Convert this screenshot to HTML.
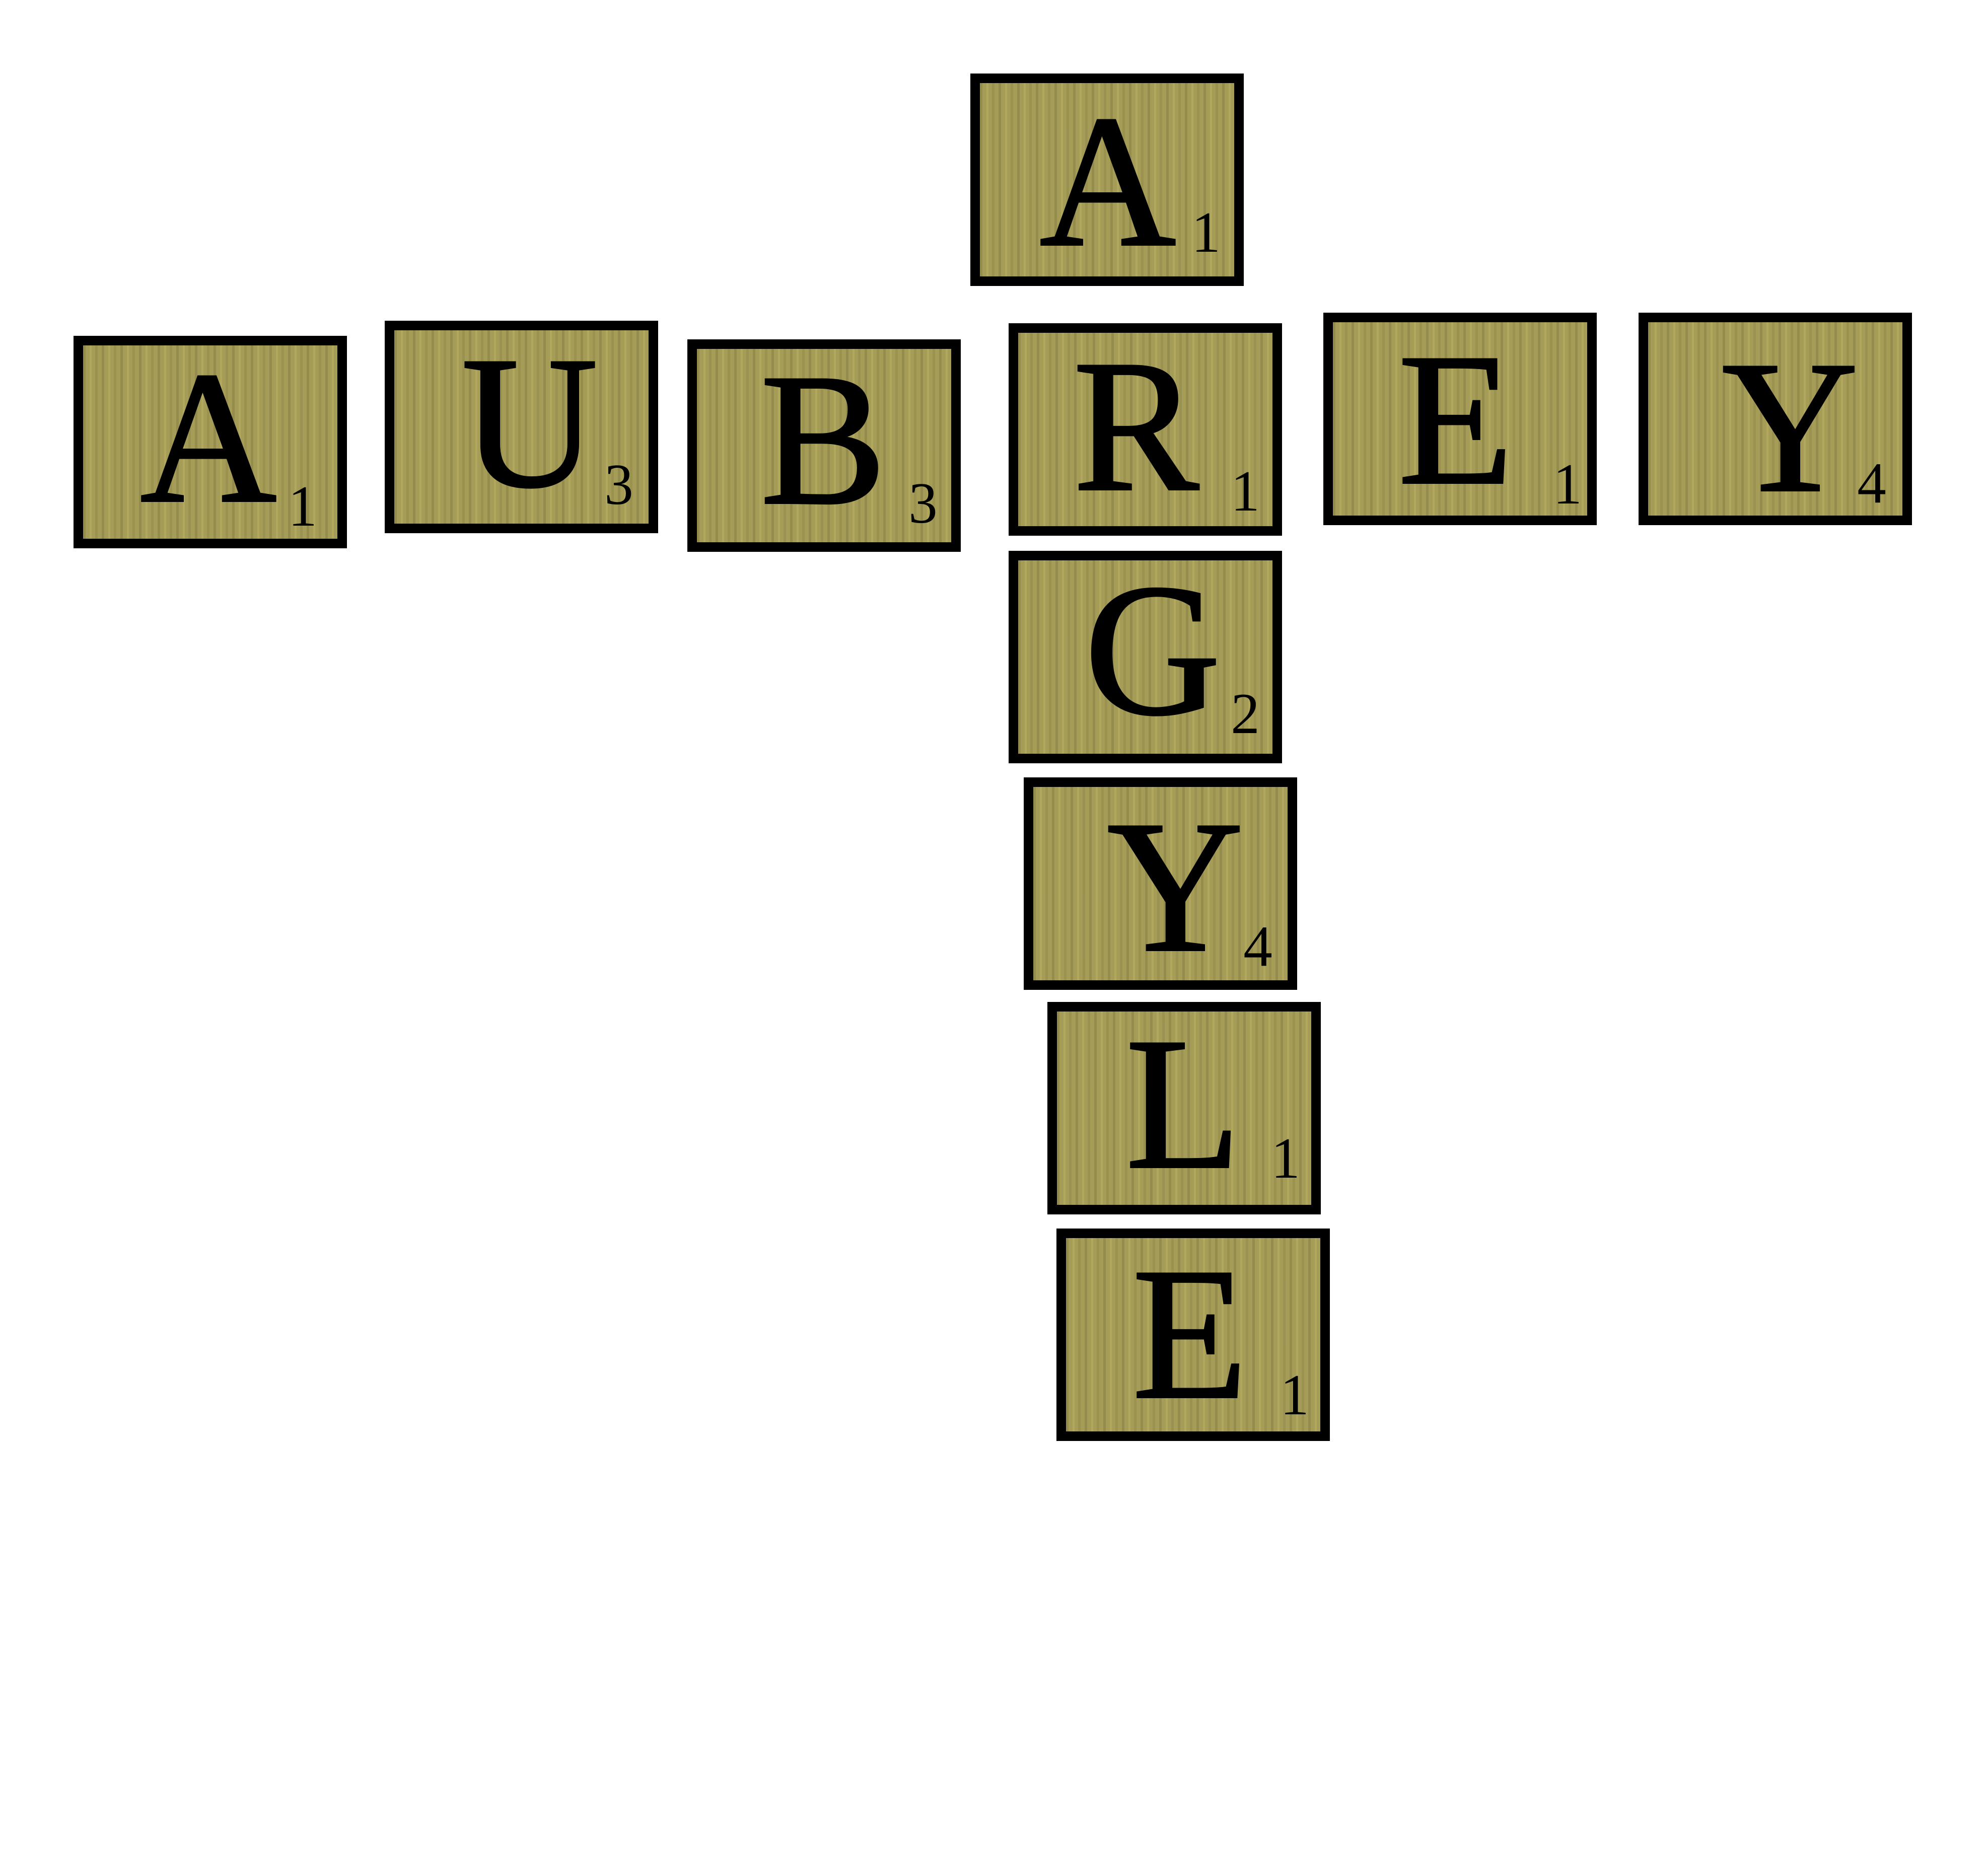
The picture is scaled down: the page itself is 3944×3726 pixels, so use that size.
<!DOCTYPE html>
<html><head><meta charset="utf-8">
<style>
html,body{margin:0;padding:0;background:#fff;}
body{width:3944px;height:3726px;position:relative;overflow:hidden;}
.t{position:absolute;width:543px;height:422px;box-sizing:border-box;border:19px solid #000;
background-color:#a59c57;
background-image:
repeating-linear-gradient(90deg,rgba(60,55,20,.16) 0 5px,rgba(0,0,0,0) 5px 13px,rgba(230,220,120,.18) 13px 17px,rgba(0,0,0,0) 17px 24px,rgba(80,70,30,.12) 24px 29px,rgba(0,0,0,0) 29px 37px);}
.l,.n{position:absolute;font-family:"Liberation Serif",serif;color:#000;text-align:center;white-space:nowrap;}
.l{width:500px;height:375px;font-size:375px;line-height:375px;-webkit-text-stroke:4px #000;}
.n{width:120px;height:115px;font-size:115px;line-height:115px;}
</style></head><body>

<div class="t" style="left:1927px;top:146px"><div class="l" style="left:4px;top:8px">A</div><div class="n" style="left:389px;top:239px">1</div></div>
<div class="t" style="left:146px;top:667px"><div class="l" style="left:-1px;top:-4px">A</div><div class="n" style="left:376px;top:262px">1</div></div>
<div class="t" style="left:764px;top:637px"><div class="l" style="left:19px;top:-4px">U</div><div class="n" style="left:386px;top:249px">3</div></div>
<div class="t" style="left:1365px;top:674px"><div class="l" style="left:1px;top:-7px">B</div><div class="n" style="left:389px;top:249px">3</div></div>
<div class="t" style="left:2003px;top:642px"><div class="l" style="left:-16px;top:-2px">R</div><div class="n" style="left:391px;top:257px">1</div></div>
<div class="t" style="left:2628px;top:621px"><div class="l" style="left:-6px;top:6px">E</div><div class="n" style="left:406px;top:264px">1</div></div>
<div class="t" style="left:3254px;top:621px"><div class="l" style="left:32px;top:21px">Y</div><div class="n" style="left:384px;top:262px">4</div></div>
<div class="t" style="left:2003px;top:1094px"><div class="l" style="left:17px;top:-9px">G</div><div class="n" style="left:391px;top:247px">2</div></div>
<div class="t" style="left:2033px;top:1544px"><div class="l" style="left:32px;top:11px">Y</div><div class="n" style="left:386px;top:259px">4</div></div>
<div class="t" style="left:2080px;top:1990px"><div class="l" style="left:1px;top:-4px">L</div><div class="n" style="left:394px;top:234px">1</div></div>
<div class="t" style="left:2098px;top:2440px"><div class="l" style="left:-4px;top:3px">E</div><div class="n" style="left:394px;top:254px">1</div></div>

</body></html>
